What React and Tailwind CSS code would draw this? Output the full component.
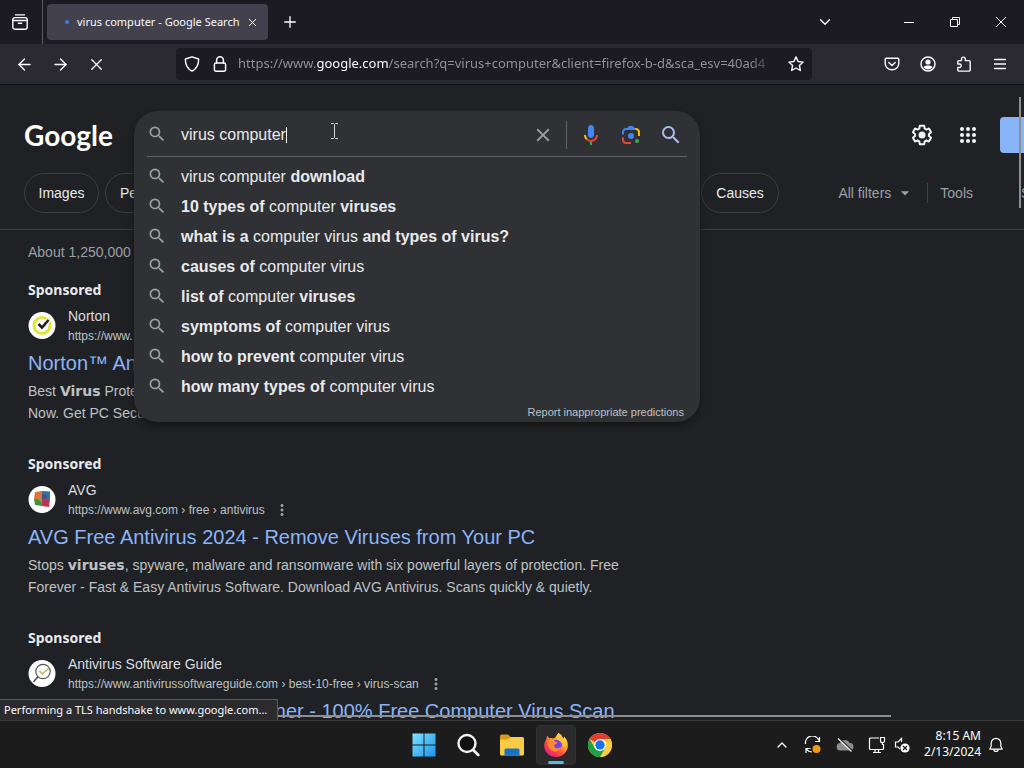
import React, { useState } from "react";
import { ArrowLeft, ArrowRight, ChevronDown, ChevronUp, Plus, X } from "lucide-react";
import { MdArrowDropDown, MdClose, MdMoreVert, MdSearch } from "react-icons/md";

const suggestions = [
  [["virus computer "], ["download", true]],
  [["10 types of ", true], ["computer "], ["viruses", true]],
  [["what is a ", true], ["computer virus "], ["and types of virus?", true]],
  [["causes of ", true], ["computer virus"]],
  [["list of ", true], ["computer "], ["viruses", true]],
  [["symptoms of ", true], ["computer virus"]],
  [["how to prevent ", true], ["computer virus"]],
  [["how many types of ", true], ["computer virus"]],
];

const StrokeIcon = ({ children, size = 16, width = 1.3 }) => (
  <svg
    width={size}
    height={size}
    viewBox="0 0 16 16"
    fill="none"
    stroke="currentColor"
    strokeWidth={width}
    strokeLinecap="round"
    strokeLinejoin="round"
  >
    {children}
  </svg>
);

const TabsIcon = () => (
  <StrokeIcon width={1.4}>
    <path d="M3.500 .9h9" />
    <path d="M.8 6.500V5.600a2 2 0 0 1 2-2h10.400a2 2 0 0 1 2 2v.9z" />
    <path d="M.8 6.500v6.700a2 2 0 0 0 2 2h10.400a2 2 0 0 0 2-2V6.500M6.400 9.300h3.200" />
  </StrokeIcon>
);

const ShieldIcon = () => (
  <StrokeIcon width={1.4}>
    <path d="M8 .9 14.6 3c.2 5.300-1.500 9.300-6.600 12.200C2.900 12.300 1.200 8.300 1.400 3z" />
  </StrokeIcon>
);

const LockIcon = () => (
  <StrokeIcon width={1.5}>
    <rect x="2.400" y="7" width="11.200" height="8.200" rx="1.400" />
    <path d="M4.600 7V4.200a3.400 3.400 0 0 1 6.800 0V7" />
  </StrokeIcon>
);

const StarIcon = () => (
  <StrokeIcon width={1.4}>
    <path d="m8 .9 2.100 4.600 5 .6-3.700 3.400 1 5L8 12l-4.400 2.500 1-5L.9 6.100l5-.6z" />
  </StrokeIcon>
);

const PocketIcon = () => (
  <StrokeIcon width={1.4}>
    <path d="M2.400 2.300h11.200a1.200 1.200 0 0 1 1.200 1.200v4a6.800 6.300 0 0 1-13.600 0v-4a1.200 1.200 0 0 1 1.200-1.200z" />
    <path d="M4.800 6.400 8 9.400l3.200-3" />
  </StrokeIcon>
);

const AccountIcon = () => (
  <StrokeIcon width={1.5}>
    <circle cx="8" cy="8" r="7" />
    <circle cx="8" cy="6" r="2.600" fill="currentColor" stroke="none" />
    <path d="M3.500 11c1.500-2 7.500-2 9 0-1.500 3.200-7.500 3.200-9 0z" fill="currentColor" stroke="none" />
  </StrokeIcon>
);

const PuzzleIcon = () => (
  <StrokeIcon width={1.4}>
    <path d="M5.500 4.600V3a1.900 1.900 0 0 1 3.800 0v1.600h3.700a1.200 1.200 0 0 1 1.200 1.200v8.100a1.200 1.200 0 0 1-1.200 1.200H3a1.200 1.200 0 0 1-1.200-1.200v-2.400h1.700a1.700 1.700 0 0 0 0-3.500H1.800V5.800A1.200 1.200 0 0 1 3 4.600z" />
  </StrokeIcon>
);

const GearIcon = () => (
  <svg width="24" height="24" viewBox="0 0 24 24" fill="currentColor">
    <path d="M13.85 22.25h-3.7c-.74 0-1.36-.54-1.45-1.27l-.27-1.89c-.27-.14-.53-.29-.79-.46l-1.8.72c-.7.26-1.47-.03-1.81-.65L2.2 15.53c-.35-.66-.2-1.44.36-1.88l1.53-1.19c-.01-.15-.02-.3-.02-.46 0-.15.01-.31.02-.46l-1.52-1.19c-.59-.45-.74-1.26-.37-1.88l1.85-3.19c.34-.62 1.11-.9 1.79-.63l1.81.73c.26-.17.52-.32.78-.46l.27-1.91c.09-.7.71-1.25 1.44-1.25h3.7c.74 0 1.36.54 1.45 1.27l.27 1.89c.27.14.53.29.79.46l1.8-.72c.71-.26 1.48.03 1.82.65l1.84 3.18c.36.66.2 1.44-.36 1.88l-1.52 1.19c.01.15.02.3.02.46s-.01.31-.02.46l1.52 1.19c.56.45.72 1.23.37 1.86l-1.86 3.22c-.34.62-1.11.9-1.8.63l-1.8-.72c-.26.17-.52.32-.78.46l-.27 1.91c-.1.68-.72 1.22-1.46 1.22zm-3.23-2h2.76l.37-2.55.53-.22c.44-.18.88-.44 1.34-.78l.45-.34 2.38.96 1.38-2.4-2.03-1.58.07-.56c.03-.26.06-.51.06-.78s-.03-.53-.06-.78l-.07-.56 2.03-1.58-1.39-2.4-2.39.96-.45-.35c-.42-.32-.87-.58-1.33-.77l-.52-.22-.37-2.55h-2.76l-.37 2.55-.53.21c-.44.19-.88.44-1.34.79l-.45.33-2.38-.95-1.39 2.39 2.03 1.58-.07.56a7 7 0 0 0-.06.79c0 .26.02.53.06.78l.07.56-2.03 1.58 1.38 2.4 2.39-.96.45.35c.43.33.86.58 1.33.77l.53.22.38 2.55z" />
    <circle cx="12" cy="12" r="3.500" />
  </svg>
);

const AppsIcon = () => (
  <svg width="24" height="24" viewBox="0 0 24 24" fill="currentColor">
    {[6, 12, 18].map((cy) => [6, 12, 18].map((cx) => <circle key={`${cx}-${cy}`} cx={cx} cy={cy} r="2" />))}
  </svg>
);

const MicIcon = () => (
  <svg width="24" height="24" viewBox="0 0 24 24">
    <path fill="#4285f4" d="m12 15c1.66 0 3-1.31 3-2.97v-7.02c0-1.66-1.34-3.01-3-3.01s-3 1.34-3 3.01v7.02c0 1.66 1.34 2.97 3 2.97z" />
    <path fill="#34a853" d="m11 18.08h2v3.92h-2z" />
    <path fill="#fbbc04" d="m7.05 16.87c-1.27-1.33-2.05-2.83-2.05-4.87h2c0 1.45.56 2.42 1.47 3.38v.32l-1.15 1.18z" />
    <path fill="#ea4335" d="m12 16.93a4.97 5.25 0 0 1-3.54-1.55l-1.41 1.49c1.26 1.34 3.02 2.13 4.95 2.13 3.87 0 6.99-2.92 6.99-7h-1.99c0 2.92-2.24 4.93-5 4.93z" />
  </svg>
);

const LensIcon = () => (
  <svg width="24" height="24" viewBox="0 0 192 192">
    <circle fill="#34a853" cx="144" cy="144" r="16" />
    <circle fill="#4285f4" cx="96" cy="104" r="24" />
    <path fill="#ea4335" d="M24 135.2c0 18.11 14.69 32.8 32.8 32.8H96v-16l-40.1-.1c-8.8 0-15.900-8.190-15.900-17.900v-18H24z" />
    <path fill="#fbbc04" d="M168 72.8c0-18.110-14.690-32.800-32.800-32.800H116l20 16c8.800 0 16 8.290 16 18v30h16z" />
    <path fill="#4285f4" d="M112 24H80L68 40H56.800C38.690 40 24 54.690 24 72.800V92h16V74c0-9.710 7.200-18 16-18h80l-12-16z" />
  </svg>
);

const NortonLogo = () => (
  <svg width="28" height="28" viewBox="0 0 28 28">
    <circle cx="14" cy="13.500" r="13.500" fill="#fff" />
    <circle cx="14" cy="13.500" r="8" fill="none" stroke="#e2e638" strokeWidth="3" />
    <path d="m10.500 12 3.500 4 6.500-8" fill="none" stroke="#fff" strokeWidth="5" />
    <path d="m10.500 12 3.500 3.500 6.500-7.500" fill="none" stroke="#1d1d22" strokeWidth="2.600" />
  </svg>
);

const AvgLogo = () => (
  <svg width="28" height="28" viewBox="0 0 28 28">
    <circle cx="14" cy="13.500" r="13.500" fill="#fff" />
    <path d="m7 6 7-1v8H6z" fill="#d9763a" />
    <path d="m14 5 8 .5V13h-8z" fill="#2d74a8" />
    <path d="M6 13h8v7l-7-1z" fill="#3f9444" />
    <path d="M14 13h8l-1 8-7-1z" fill="#bd3550" />
    <path d="m14 8 5 1v4h-5z" fill="#4b4f88" />
    <path d="M9 13h5v4z" fill="#6ea63f" />
  </svg>
);

const GuideLogo = () => (
  <svg width="28" height="28" viewBox="0 0 28 28" fill="none">
    <circle cx="14" cy="13.500" r="13.500" fill="#fff" />
    <circle cx="15" cy="11.500" r="7.200" stroke="#555" strokeWidth="1.200" />
    <path d="m10 16.500-4.500 5.500" stroke="#444" strokeWidth="1.400" />
    <path d="m11.500 11 3 3 6.500-6" stroke="#c9b458" strokeWidth="1.600" />
  </svg>
);

const WindowsIcon = () => (
  <svg width="24" height="24" viewBox="0 0 24 24">
    <defs>
      <linearGradient id="win" x1="0" y1="0" x2="1" y2="1">
        <stop offset="0" stopColor="#7fe3ff" />
        <stop offset="1" stopColor="#1a94ec" />
      </linearGradient>
    </defs>
    <path fill="url(#win)" d="M.5.500h11v11H.5zM12.500.500h11v11h-11zM.5 12.500h11v11H.5zM12.500 12.500h11v11h-11z" />
  </svg>
);

const TaskSearchIcon = () => (
  <svg width="24" height="24" viewBox="0 0 24 24" fill="none" stroke="#f3f3f3">
    <circle cx="11" cy="10.500" r="8.500" fill="#111" strokeWidth="2.400" />
    <path d="m17.200 17 5 5" strokeWidth="2.800" strokeLinecap="round" />
  </svg>
);

const FolderIcon = () => (
  <svg width="26" height="24" viewBox="0 0 26 24">
    <path d="M1 3a1.500 1.500 0 0 1 1.500-1.500H9L11.500 4 9 8H1z" fill="#d99a14" />
    <path d="M1 6.500h7.500l3-2.500H23.500A1.500 1.500 0 0 1 25 5.500V21a1.500 1.500 0 0 1-1.500 1.500h-21A1.500 1.500 0 0 1 1 21z" fill="#fbcb46" />
    <path d="M5.500 22.500V17A1.500 1.500 0 0 1 7 15.500h12a1.500 1.500 0 0 1 1.500 1.500v5.500z" fill="#1674c4" />
  </svg>
);

const FirefoxIcon = () => (
  <svg width="26" height="26" viewBox="0 0 26 26">
    <defs>
      <linearGradient id="fox" x1=".85" y1=".1" x2=".2" y2=".95">
        <stop offset="0" stopColor="#fff04a" />
        <stop offset=".35" stopColor="#ffa02c" />
        <stop offset=".65" stopColor="#ff4a3d" />
        <stop offset="1" stopColor="#e3198a" />
      </linearGradient>
    </defs>
    <path
      fill="url(#fox)"
      d="M15.500 1c2.600 1.500 4 3.400 4.300 5.500 1-.3 1.300-1.100 1.300-2 2.800 3 3.900 6 3.700 9.500-.4 6.200-5.300 11-11.800 11S1.200 20.200 1.200 14c0-2.700.6-4.800 2-6.600.1-1.500.5-2.700 1.500-3.700.2 1.200.7 2 1.500 2.500 1.200-.3 2.500-.2 3.600.3 1.700-.4 2.300-.9 3.400-2.300.5-1.200 1.200-2.300 2.300-3.200z"
    />
    <circle cx="13.500" cy="13" r="5.300" fill="#7542e5" />
    <path fill="#ff8a2b" d="M4.500 9.500c2-2 5.200-2.200 7-.6.700.9 1.900.9 3 1.100-.3 1.500-1.700 2-3 2.700-.8 1.800.2 3 1.700 3.500 2 .6 3.400-.8 5-1.200-.9 2.900-3.200 4.500-6.200 4.500-4.400 0-7.700-4.400-7.500-10z" />
    <path fill="#ffc43b" d="M15.500 1c2.600 1.500 4 3.400 4.300 5.500 2.300 3 2.400 7.400.7 9.500.2-3-1-5.500-3.500-6.800-3-1.500-3.500-5-1.500-8.200z" />
  </svg>
);

const ChromeIcon = () => (
  <svg width="24" height="24" viewBox="0 0 24 24">
    <circle cx="12" cy="12" r="12" fill="#ffcd40" />
    <path d="M12 12 1.600 6A12 12 0 0 1 22.400 6z" fill="#e33b2e" />
    <path d="M12 6h10.400A12 12 0 0 1 12 24l5.200-9z" fill="#ffcd40" />
    <path d="M1.600 6A12 12 0 0 0 12 24l5.200-9L12 12 6.800 15z" fill="#22a045" />
    <circle cx="12" cy="12" r="6" fill="#fff" />
    <circle cx="12" cy="12" r="4.700" fill="#1a73e8" />
  </svg>
);

const SyncIcon = () => (
  <svg width="18" height="18" viewBox="0 0 18 18" fill="none" stroke="#fff" strokeWidth="1.200">
    <path d="M1.500 8A7 7 0 0 1 15 4.500M15.500 1v4.500H11M2 17v-4.500h4.500M2.500 13A7 7 0 0 0 8 16" />
    <circle cx="12.500" cy="13" r="4" fill="#f59b0b" stroke="none" />
  </svg>
);

const CloudOffIcon = () => (
  <svg width="18" height="16" viewBox="0 0 18 16">
    <path d="M4.500 13.500a3.700 3.700 0 0 1-.3-7.400 5 5 0 0 1 9.300 0 3.700 3.700 0 0 1 .5 7.400z" fill="#8f8f8f" />
    <path d="m3 1 13.500 13" stroke="#1c1c1c" strokeWidth="1.200" />
    <path d="m2 1.500 13.500 13" stroke="#f0f0f0" strokeWidth="1.300" />
  </svg>
);

const NetworkIcon = () => (
  <svg width="18" height="18" viewBox="0 0 18 18" fill="none" stroke="#fff" strokeWidth="1.200">
    <path d="M11 2H2.500a1 1 0 0 0-1 1v9.500a1 1 0 0 0 1 1h12a1 1 0 0 0 1-1V8M5 16.500h8M7 13.500v3M10.500 13.500v3" />
    <path d="M12.500 1.500h4v3.200a2 2 0 0 1-4 0zM14.500 6.500V9" />
  </svg>
);

const MutedIcon = () => (
  <svg width="16" height="18" viewBox="0 0 16 18" fill="none" stroke="#fff" strokeWidth="1.200">
    <path d="M7.500 6V2.500L4 6H1.500v5H4l2 2" />
    <circle cx="11" cy="12" r="4.600" fill="#fff" stroke="none" />
    <path d="m9 10 4 4M13 10l-4 4" stroke="#1c1c1c" />
  </svg>
);

const BellIcon = () => (
  <StrokeIcon size={16} width={1.2}>
    <path d="M8 1.300a4.800 4.800 0 0 0-4.800 4.800v3L1.800 12.200h12.400l-1.400-3.100v-3A4.800 4.800 0 0 0 8 1.300zM6 12.500a2 2 0 0 0 4 0" />
  </StrokeIcon>
);

const TabBar = () => (
  <div className="flex h-11 shrink-0 bg-[#1c1b22] text-[#fbfbfe]">
    <button aria-label="View tabs" className="flex w-[43px] items-center justify-center border-r border-[#5b5b66] pr-0.5">
      <TabsIcon />
    </button>
    <div className="my-1 ml-1 flex w-[221px] items-center rounded bg-[#42414d] pr-2 pl-[18px]">
      <span className="size-1 shrink-0 rounded-full bg-[#3584e4]" />
      <span className="ml-2 flex-1 text-[11px] whitespace-nowrap">virus computer - Google Search</span>
      <button aria-label="Close tab" className="flex size-4 items-center justify-center">
        <X size={13} strokeWidth={1.8} />
      </button>
    </div>
    <button aria-label="New tab" className="flex w-11 items-center justify-center">
      <Plus size={18} strokeWidth={1.8} />
    </button>
    <div className="ml-auto flex">
      <button aria-label="List all tabs" className="mr-[38px] flex w-[46px] items-center justify-center">
        <ChevronDown size={18} strokeWidth={1.8} />
      </button>
      <button aria-label="Minimize" className="flex w-[46px] items-center justify-center">
        <svg width="10" height="10" viewBox="0 0 10 10" stroke="currentColor">
          <path d="M0 5.500h10" />
        </svg>
      </button>
      <button aria-label="Restore" className="flex w-[46px] items-center justify-center">
        <svg width="10" height="10" viewBox="0 0 10 10" fill="none" stroke="currentColor">
          <path d="M.5 2.500h7v7h-7zM2.500 2.500v-2h7v7h-2" />
        </svg>
      </button>
      <button aria-label="Close window" className="flex w-[46px] items-center justify-center">
        <svg width="10" height="10" viewBox="0 0 10 10" stroke="currentColor">
          <path d="m0 0 10 10M10 0 0 10" />
        </svg>
      </button>
    </div>
  </div>
);

const ToolButton = ({ label, children }) => (
  <button aria-label={label} className="flex h-9 w-9 items-center justify-center">
    {children}
  </button>
);

const NavBar = () => (
  <div className="flex h-[41px] shrink-0 items-center border-b border-[#0f0f14] bg-[#2b2a33] px-1.5 text-[#fbfbfe]">
    <ToolButton label="Back">
      <ArrowLeft size={19} strokeWidth={1.7} />
    </ToolButton>
    <ToolButton label="Forward">
      <ArrowRight size={19} strokeWidth={1.7} />
    </ToolButton>
    <ToolButton label="Stop">
      <X size={19} strokeWidth={1.7} />
    </ToolButton>
    <div className="mx-[62px] flex h-8 min-w-0 flex-1 items-center rounded bg-[#1c1b22] px-2">
      <ShieldIcon />
      <span className="mr-2.5 ml-3 flex">
        <LockIcon />
      </span>
      <div className="min-w-0 flex-1 mask-r-from-95% text-[13px] whitespace-nowrap text-[#8f8f9d]">
        https://www.<span className="text-[#fbfbfe]">google.com</span>
        /search?q=virus+computer&amp;client=firefox-b-d&amp;sca_esv=40ad4
      </div>
      <button aria-label="Bookmark this page" className="ml-3 flex">
        <StarIcon />
      </button>
    </div>
    <ToolButton label="Save to Pocket">
      <PocketIcon />
    </ToolButton>
    <ToolButton label="Account">
      <AccountIcon />
    </ToolButton>
    <ToolButton label="Extensions">
      <PuzzleIcon />
    </ToolButton>
    <ToolButton label="Menu">
      <StrokeIcon width={1.4}>
        <path d="M2.500 3.500h11M2.500 8h11M2.500 12.500h11" />
      </StrokeIcon>
    </ToolButton>
  </div>
);

const SearchPanel = () => {
  const [query, setQuery] = useState("virus computer");

  return (
    <div className="absolute inset-x-0 top-0 z-10 rounded-3xl bg-[#303134] px-[13px] text-[16px] text-[#e8eaed] shadow-[0_4px_6px_0_#171717]">
      <div className="relative flex h-[46px] items-center border-b border-[#5f6368] pt-0.5">
        <MdSearch size={20} className="mb-0.5 text-[#9aa0a6]" />
        <input
          aria-label="Search"
          className="ml-3.5 [field-sizing:content] bg-transparent outline-none"
          value={query}
          onChange={(e) => setQuery(e.target.value)}
        />
        <span className="h-4 w-px bg-white" />
        <svg width="9" height="16" viewBox="0 0 9 16" fill="none" stroke="#d5d5d5" className="absolute top-3 left-[183px]">
          <path d="M1 .5h2.500l1 1 1-1H8M4.500 1.500v13M1 15.500h2.500l1-1 1 1H8" />
        </svg>
        <button aria-label="Clear" className="ml-auto flex text-[#9aa0a6]">
          <MdClose size={22} />
        </button>
        <span className="mx-3 h-7 w-px bg-[#5f6368]" />
        <button aria-label="Search by voice">
          <MicIcon />
        </button>
        <button aria-label="Search by image" className="ml-4">
          <LensIcon />
        </button>
        <button aria-label="Submit search" className="mr-1 ml-4 flex text-[#a8c0f0]">
          <MdSearch size={24} />
        </button>
      </div>
      <ul className="mt-[5px]">
        {suggestions.map((parts, index) => (
          <li key={index} className="flex h-[30px] items-center">
            <MdSearch size={20} className="mr-3.5 mb-0.5 text-[#9aa0a6]" />
            <span className="whitespace-pre">
              {parts.map(([text, bold], i) => (
                <span key={i} className={bold ? "font-bold" : ""}>
                  {text}
                </span>
              ))}
            </span>
          </li>
        ))}
      </ul>
      <div className="flex h-5 items-center justify-end pr-[3px] text-[11px] text-[#bdc1c6]">
        <a href="#report">Report inappropriate predictions</a>
      </div>
    </div>
  );
};

const PageHeader = () => (
  <header className="border-b border-[#3c4043] pt-[26px] pb-4">
    <div className="flex h-12 items-center pl-6">
      <a href="#home" className="w-[90px] font-['Lato'] text-[28px] leading-8 font-bold text-white">
        Google
      </a>
      <div className="relative ml-5 h-12 w-[566px] shrink-0">
        <SearchPanel />
      </div>
      <div className="ml-auto flex items-center text-[#f1f3f4]">
        <button aria-label="Settings" className="mr-[22px]">
          <GearIcon />
        </button>
        <button aria-label="Google apps" className="mr-5">
          <AppsIcon />
        </button>
        <button aria-label="Sign in" className="h-9 w-6 rounded-l bg-[#8ab4f8]" />
      </div>
    </div>
    <div className="mt-3.5 flex h-10 items-center pl-6 text-[14px] text-[#9aa0a6]">
      <button className="h-10 w-[75px] shrink-0 rounded-full border border-[#3c4043] text-[#e8eaed]">Images</button>
      <button className="ml-1.5 h-10 w-[590px] shrink-0 rounded-full border border-[#3c4043] pl-3.5 text-left text-[#e8eaed]">
        Pe
      </button>
      <button className="ml-1.5 h-10 w-[78px] shrink-0 rounded-full border border-[#3c4043] text-[#e8eaed]">Causes</button>
      <button className="ml-auto flex items-center">
        All filters
        <MdArrowDropDown size={20} className="ml-1" />
      </button>
      <span className="mx-3 h-5 w-px bg-[#3c4043]" />
      <button>Tools</button>
      <span className="ml-12 w-[3px] overflow-hidden">S</span>
    </div>
  </header>
);

const Result = ({ logo, name, url, title, menu, children }) => (
  <article className="mb-[30px]">
    <p className="font-['Noto_Sans'] text-[14px] leading-5 font-bold text-[#e8eaed]">Sponsored</p>
    <div className="mt-1.5 flex h-10 items-center gap-3">
      {logo}
      <div>
        <p className="text-[14px] leading-5 text-[#dadce0]">{name}</p>
        <p className="flex h-5 items-center text-[12px] leading-5 text-[#bdc1c6]">
          {url}
          {menu && (
            <button aria-label="About this result" className="ml-2">
              <MdMoreVert size={18} className="text-[#9aa0a6]" />
            </button>
          )}
        </p>
      </div>
    </div>
    <h3 className="mt-1 text-[20px] leading-[26px]">
      <a href="#result" className="text-[#8ab4f8]">
        {title}
      </a>
    </h3>
    <p className="mt-1 text-[14px] leading-[22px] text-[#bdc1c6]">{children}</p>
  </article>
);

const Strong = ({ children }) => <b className="font-['DejaVu_Sans'] text-[14px] leading-none">{children}</b>;

const TaskItem = ({ label, active, children }) => (
  <button
    aria-label={label}
    className={
      active
        ? "relative mx-0.5 flex size-10 items-center justify-center rounded border border-[#303030] bg-[#2a2a2a]"
        : "mx-0.5 flex size-10 items-center justify-center"
    }
  >
    {children}
    {active && <span className="absolute bottom-0 h-[3px] w-4 rounded-full bg-[#5ab8e6]" />}
  </button>
);

const Taskbar = () => (
  <footer className="grid h-12 shrink-0 grid-cols-[1fr_auto_1fr] items-center border-t border-[#3a3a3a] bg-[#1c1c1c] text-white">
    <span />
    <div className="flex">
      <TaskItem label="Start">
        <WindowsIcon />
      </TaskItem>
      <TaskItem label="Search">
        <TaskSearchIcon />
      </TaskItem>
      <TaskItem label="File Explorer">
        <FolderIcon />
      </TaskItem>
      <TaskItem label="Firefox" active>
        <FirefoxIcon />
      </TaskItem>
      <TaskItem label="Chrome">
        <ChromeIcon />
      </TaskItem>
    </div>
    <div className="flex items-center justify-end pr-5">
      <button aria-label="Show hidden icons" className="mr-3.5">
        <ChevronUp size={16} />
      </button>
      <span className="mr-3.5">
        <SyncIcon />
      </span>
      <span className="mr-3.5">
        <CloudOffIcon />
      </span>
      <span className="mr-2">
        <NetworkIcon />
      </span>
      <MutedIcon />
      <div className="mr-[7px] ml-3.5 pb-0.5 text-right text-[12px] leading-4">
        <p>8:15 AM</p>
        <p>2/13/2024</p>
      </div>
      <BellIcon />
    </div>
  </footer>
);

const App = () => {
  return (
    <div className="flex h-screen flex-col overflow-hidden bg-[#202124] font-['Noto_Sans',sans-serif]">
      <TabBar />
      <NavBar />
      <main className="relative min-h-0 flex-1 overflow-hidden bg-[#202124] font-['Liberation_Sans',sans-serif]">
        <PageHeader />
        <section className="px-7 pt-3">
          <p className="mb-[18px] text-[14px] leading-5 text-[#9aa0a6]">About 1,250,000</p>
          <Result logo={<NortonLogo />} name="Norton" url="https://www." title="Norton™ An">
            Best <Strong>Virus</Strong> Prote
            <br />
            Now. Get PC Secu
          </Result>
          <Result
            logo={<AvgLogo />}
            name="AVG"
            url="https://www.avg.com › free › antivirus"
            title="AVG Free Antivirus 2024 - Remove Viruses from Your PC"
            menu
          >
            Stops <Strong>viruses</Strong>, spyware, malware and ransomware with six powerful layers of protection. Free
            <br />
            Forever - Fast &amp; Easy Antivirus Software. Download AVG Antivirus. Scans quickly &amp; quietly.
          </Result>
          <Result
            logo={<GuideLogo />}
            name="Antivirus Software Guide"
            url="https://www.antivirussoftwareguide.com › best-10-free › virus-scan"
            title="#1 Best Free Antivirus Scanner - 100% Free Computer Virus Scan"
            menu
          />
        </section>
        {/* overlay scrollbars */}
        <span className="absolute top-3 right-[3px] h-[111px] w-0.5 bg-[#8f8f93]" />
        <span className="absolute bottom-[3px] left-0 h-0.5 w-[87%] bg-[#8f8f93]" />
        <div className="absolute bottom-0 left-0 h-[21px] border-t border-r border-[#5b5b5f] bg-[#2b2b2e] pr-2.5 pl-1 font-['Noto_Sans'] text-[11px] leading-5 text-[#fbfbfe]">
          Performing a TLS handshake to www.google.com...
        </div>
      </main>
      <Taskbar />
    </div>
  );
};

export default App;
